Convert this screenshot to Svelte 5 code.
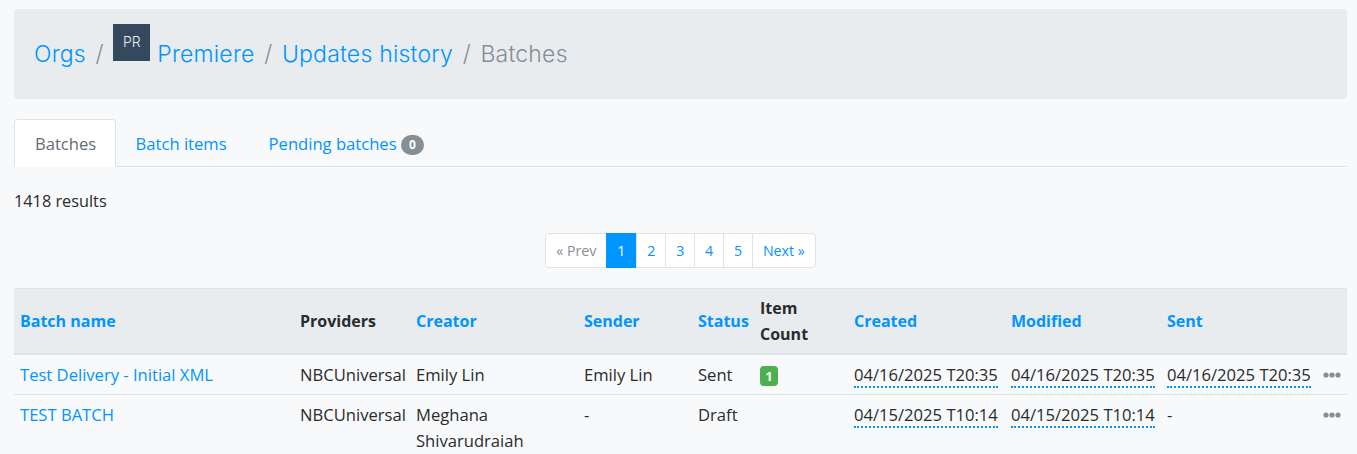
<script>
  const crumbs = ['Updates history'];
  const pages = ['2', '3', '4', '5'];
  const widths = [280, 116, 168, 114, 62, 94, 157, 156, 156, 30];
</script>

<div class="page">
  <nav class="crumbs">
    <a href="#o">Orgs</a><span class="sep">/</span>
    <span class="avatar">PR</span><a href="#p">Premiere</a><span class="sep">/</span>
    {#each crumbs as c}<a href="#u">{c}</a><span class="sep">/</span>{/each}
    <span class="current">Batches</span>
  </nav>

  <ul class="tabs">
    <li class="tab active">Batches</li>
    <li class="tab"><a href="#i">Batch items</a></li>
    <li class="tab"><a href="#b">Pending batches</a> <span class="pill">0</span></li>
  </ul>

  <p class="count">1418 results</p>

  <div class="pager-wrap">
    <div class="pager">
      <span class="pg muted">« Prev</span>
      <span class="pg on">1</span>
      {#each pages as p}<a class="pg" href="#n">{p}</a>{/each}
      <a class="pg" href="#n">Next »</a>
    </div>
  </div>

  <table>
    <colgroup>{#each widths as w}<col style="width:{w}px" />{/each}</colgroup>
    <thead>
      <tr>
        <th><a href="#s">Batch name</a></th>
        <th>Providers</th>
        <th><a href="#s">Creator</a></th>
        <th><a href="#s">Sender</a></th>
        <th><a href="#s">Status</a></th>
        <th>Item Count</th>
        <th><a href="#s">Created</a></th>
        <th><a href="#s">Modified</a></th>
        <th><a href="#s">Sent</a></th>
        <th></th>
      </tr>
    </thead>
    <tbody>
      {#snippet dots()}
        <svg class="dots" width="18" height="6" viewBox="0 0 18 6" aria-hidden="true">
          <circle cx="3" cy="3" r="2.6" /><circle cx="9" cy="3" r="2.6" /><circle cx="15" cy="3" r="2.6" />
        </svg>
      {/snippet}
      <tr>
        <td><a href="#t">Test Delivery - Initial XML</a></td>
        <td>NBCUniversal</td>
        <td>Emily Lin</td>
        <td>Emily Lin</td>
        <td>Sent</td>
        <td><span class="ok">1</span></td>
        <td><span class="date">04/16/2025 T20:35</span></td>
        <td><span class="date">04/16/2025 T20:35</span></td>
        <td><span class="date">04/16/2025 T20:35</span></td>
        <td class="more">{@render dots()}</td>
      </tr>
      <tr>
        <td><a href="#t">TEST BATCH</a></td>
        <td>NBCUniversal</td>
        <td>Meghana Shivarudraiah</td>
        <td>-</td>
        <td>Draft</td>
        <td></td>
        <td><span class="date">04/15/2025 T10:14</span></td>
        <td><span class="date">04/15/2025 T10:14</span></td>
        <td>-</td>
        <td class="more">{@render dots()}</td>
      </tr>
    </tbody>
  </table>
</div>

<style>
  :global(body) {
    margin: 0;
    background: #f8f9fb;
    color: #292b2c;
    font-family: "Open Sans", "Noto Sans", sans-serif;
    font-size: 16.6px;
    line-height: 26px;
    overflow: hidden;
  }
  a { color: #0095ff; text-decoration: none; }
  .page { padding: 9px 10px 0 14px; height: 445px; overflow: hidden; }

  .crumbs {
    height: 90px;
    box-sizing: border-box;
    padding: 0 20px;
    background: #e9ecef;
    border-radius: 4px;
    display: flex;
    align-items: center;
    font-family: Inter, "Open Sans", sans-serif;
    font-weight: 300;
    font-size: 23px;
    letter-spacing: 0.2px;
  }
  .sep { color: #868e96; margin: 0 9.6px; }
  .current { color: #868e96; }
  .avatar {
    width: 37px;
    height: 37px;
    background: #34495e;
    color: #e9ecef;
    font-size: 14px;
    letter-spacing: 0;
    line-height: 36px;
    text-align: center;
    margin-right: 7px;
    align-self: flex-start;
    margin-top: 15px;
  }

  .tabs {
    list-style: none;
    margin: 20px 0 0;
    padding: 0;
    height: 48px;
    box-sizing: border-box;
    display: flex;
    border-bottom: 1px solid #dfe3e8;
  }
  .tab {
    height: 48px;
    box-sizing: border-box;
    padding: 11px 20px;
    border: 1px solid transparent;
    border-radius: 4px 4px 0 0;
    white-space: nowrap;
  }
  .tab.active {
    background: #fff;
    color: #636c72;
    border-color: #dfe3e8 #dfe3e8 #fff;
    padding-right: 18.4px;
    margin-right: -1px;
  }
  .pill {
    display: inline-block;
    background: #868e96;
    color: #fff;
    font-size: 12px;
    font-weight: 700;
    line-height: 20px;
    min-width: 23px;
    text-align: center;
    border-radius: 10px;
    vertical-align: 1px;
  }

  .count { margin: 21px 0 0; font-size: 16.3px; }

  .pager-wrap { display: flex; justify-content: center; margin-top: 19px; }
  .pager {
    display: flex;
    background: #fff;
    border: 1px solid #dfe3e8;
    border-radius: 4px;
    height: 35px;
    box-sizing: border-box;
    font-size: 14.2px;
    line-height: 33px;
  }
  .pg { padding: 0 9.9px; border-left: 1px solid #dfe3e8; }
  .pg:first-child { border-left: 0; }
  .muted { color: #868e96; }
  .on { background: #0095ff; color: #fff; border-left: 0; margin: -1px 0; line-height: 35px; padding: 0 11px; }

  table {
    width: 1333px;
    margin-top: 20px;
    table-layout: fixed;
    border-collapse: collapse;
  }
  th {
    background: #e9ecef;
    text-align: left;
    font-weight: 700;
    font-size: 16px;
    padding: 6px;
    border-top: 1px solid #dfe3e8;
    border-bottom: 2px solid #dfe3e8;
    height: 52px;
  }
  td {
    padding: 7px 6px 5.5px;
    border-bottom: 1px solid #dfe3e8;
    vertical-align: top;
  }
  .ok {
    display: inline-block;
    background: #4caf50;
    color: #fff;
    font-size: 13px;
    font-weight: 700;
    line-height: 20px;
    min-width: 18px;
    text-align: center;
    border-radius: 4px;
  }
  .date { border-bottom: 2px dotted #0095ff; white-space: nowrap; }
  .more { white-space: nowrap; padding-right: 0; }
  .dots { display: block; margin: 10px 0 0; fill: #868e96; }
</style>
